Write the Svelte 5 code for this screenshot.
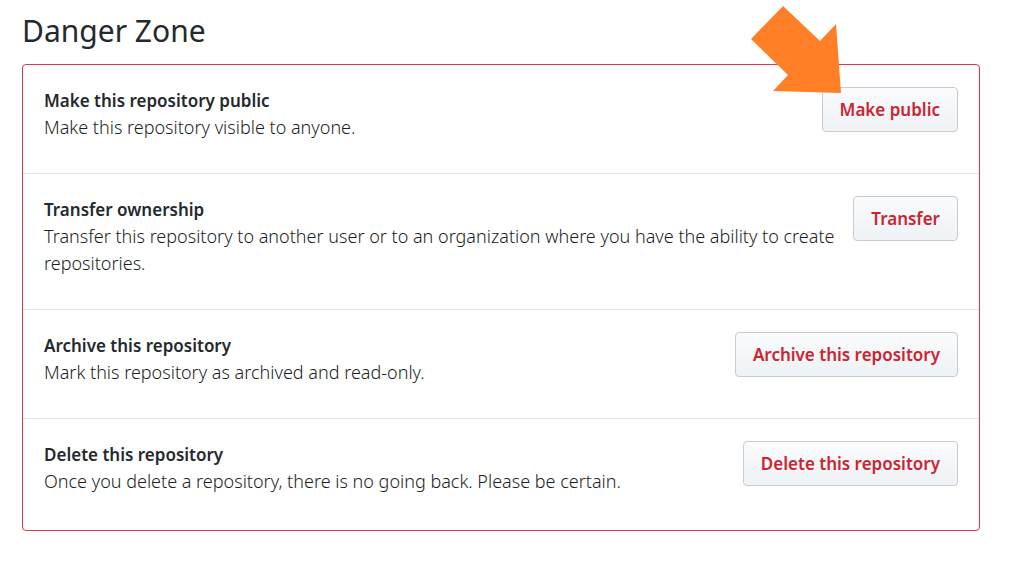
<script>
  const actions = [
    { title: 'Make this repository public', text: 'Make this repository visible to anyone.', button: 'Make public', pointed: true },
    { title: 'Transfer ownership', text: 'Transfer this repository to another user or to an organization where you have the ability to create repositories.', button: 'Transfer' },
    { title: 'Archive this repository', text: 'Mark this repository as archived and read-only.', button: 'Archive this repository' },
    { title: 'Delete this repository', text: 'Once you delete a repository, there is no going back. Please be certain.', button: 'Delete this repository' }
  ];
</script>

<main>
  <h1>Danger Zone</h1>
  <ul>
    {#each actions as action}
      <li>
        <div class="copy">
          <h2>{action.title}</h2>
          <p>{action.text}</p>
        </div>
        <div class="control">
          <button type="button">{action.button}</button>
          {#if action.pointed}
            <svg class="arrow" width="92" height="90" viewBox="0 0 92 90" aria-hidden="true">
              <path fill="#ff7f27" d="M32 0 L69 35 L85 18 L90 87 L22 85 L37 69 L0 33 Z" />
            </svg>
          {/if}
        </div>
      </li>
    {/each}
  </ul>
</main>

<style>
  :global(body) {
    margin: 0;
    background: #fff;
  }
  main {
    padding: 9px 31px 36px 22px;
    color: #24292e;
    font-family: "Segoe UI", "Noto Sans", "Open Sans", sans-serif;
    font-size: 17px;
    line-height: 27px;
  }
  h1 {
    margin: 0 0 11px;
    font-size: 30px;
    font-weight: 400;
    line-height: 44px;
  }
  ul {
    margin: 0;
    padding: 0;
    list-style: none;
    border: 1px solid #d73a49;
    border-radius: 4px;
  }
  li {
    display: flex;
    align-items: flex-start;
    justify-content: space-between;
    gap: 12px;
    padding: 22px 21px 32px;
  }
  li:last-child {
    padding-bottom: 35px;
  }
  li + li {
    border-top: 1px solid #e1e4e8;
  }
  h2 {
    margin: 0;
    font-size: 17px;
    font-weight: 600;
    line-height: 27px;
  }
  p {
    margin: 0;
    color: #1b1f23;
    font-size: 18px;
    font-weight: 300;
  }
  .control {
    position: relative;
    flex: none;
  }
  button {
    display: block;
    height: 45px;
    padding: 0 17px;
    border: 1px solid #c8cbcf;
    border-radius: 4px;
    background: linear-gradient(#fafbfc, #eff3f6 90%);
    color: #cb2431;
    font: inherit;
    font-weight: 600;
    white-space: nowrap;
  }
  .arrow {
    position: absolute;
    right: 115px;
    bottom: 36px;
  }
</style>
